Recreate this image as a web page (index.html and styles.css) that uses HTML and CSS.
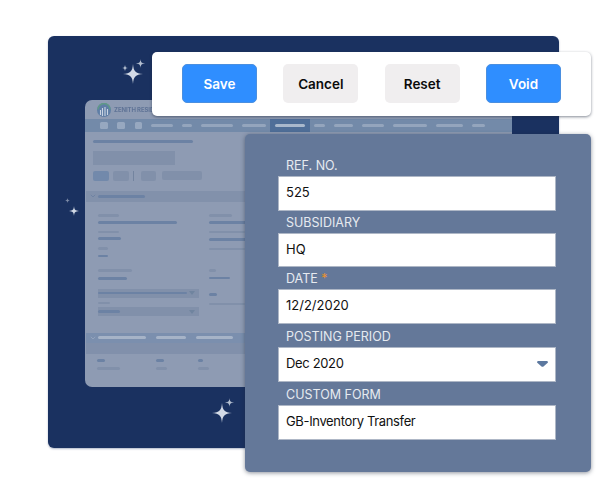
FILE: index.html
```html
<!DOCTYPE html>
<html lang="en">
<head>
<meta charset="utf-8">
<title>Inventory Transfer</title>
<link rel="stylesheet" href="styles.css">
</head>
<body>
<div class="stage">
  <div class="card">
    <div class="app">
      <div class="app-head">
        <svg class="logo" viewBox="0 0 14 14" width="14" height="14" aria-hidden="true">
          <circle cx="7" cy="7" r="7" fill="#5f7ea6"/>
          <path d="M1 6.500A6 6 0 0 1 13 6.500" fill="none" stroke="#5f9a86" stroke-width="1.4"/>
          <path d="M3.500 12V7M5.500 13V5M8 13V4M10.500 12V6" stroke="#c9d3e2" stroke-width="1.1"/>
        </svg>
        <span class="app-name">ZENITH RESIDENCES</span>
      </div>
      <div class="nav">
        <i class="sq"></i><i class="sq wide"></i><i class="sq"></i>
        <i class="nb w22"></i><i class="nb w10"></i><i class="nb w32"></i><i class="nb w24"></i>
        <span class="nav-active"><i class="nb w30 on"></i></span>
        <i class="nb w11"></i><i class="nb w19"></i><i class="nb w22"></i><i class="nb w34"></i><i class="nb w27"></i><i class="nb w13"></i>
      </div>
      <div class="main">
        <div class="title-bar"></div>
        <div class="title-box"></div>
        <div class="actions">
          <i class="act primary"></i><i class="act"></i><i class="sep"></i><i class="act last"></i><i class="act long"></i>
        </div>
        <div class="section">
          <svg class="chev" viewBox="0 0 6 4" width="6" height="4" aria-hidden="true"><path d="M.8.8 3 3 5.200.8" fill="none" stroke="#6f83a3" stroke-width="1"/></svg>
          <i class="bar dark w47"></i>
        </div>
        <div class="form">
          <div class="col">
            <i class="bar faint w21"></i><i class="bar dark w79 m4"></i>
            <i class="bar thin faint w21 m7"></i><i class="bar dark w23 m4"></i>
            <i class="bar thin faint w10 m7"></i><i class="bar thin dark w10 m5"></i>
            <i class="bar thin faint w34 m12"></i><i class="bar dark w29 m5"></i>
            <div class="sel s1"><i class="bar thin dark w89"></i><i class="caret"></i></div>
            <i class="bar thin faint w12 m4"></i>
            <div class="sel s2"><i class="bar thin dark w22"></i><i class="caret"></i></div>
          </div>
          <div class="col">
            <i class="bar faint w23"></i><i class="bar dark w79 m4"></i>
            <i class="bar thin faint w36 m7"></i><i class="bar thin dark w79 m5"></i>
            <i class="bar thin faint w36 m7"></i>
            <i class="bar thin faint w7 m19"></i><i class="bar thin dark w21 m5"></i>
            <i class="bar thin dark w8 m14"></i>
            <i class="bar thin faint w36 m7"></i>
          </div>
        </div>
        <div class="section second">
          <svg class="chev" viewBox="0 0 6 4" width="6" height="4" aria-hidden="true"><path d="M.8.8 3 3 5.200.8" fill="none" stroke="#93a3bc" stroke-width="1"/></svg>
          <i class="bar light w48"></i><i class="bar light w30"></i><i class="bar light w37"></i>
        </div>
        <div class="strip"></div>
        <div class="foot">
          <div class="foot-col c1"><i class="bar dark w8"></i><i class="bar thin faint w23 m5"></i></div>
          <div class="foot-col c2"><i class="bar dark w8"></i><i class="bar thin faint w11 m5"></i></div>
          <div class="foot-col c3"><i class="bar dark w5"></i><i class="bar thin faint w11 m5"></i></div>
        </div>
      </div>
    </div>
  </div>

  <svg class="star s-a" viewBox="-10 -10 20 20" aria-hidden="true"><path d="M0-10C.6-2.500 2.500-.6 10 0 2.500.6.6 2.500 0 10-.6 2.500-2.500.6-10 0-2.500-.6-.6-2.500 0-10Z"/></svg>
  <svg class="star s-b dim" viewBox="-10 -10 20 20" aria-hidden="true"><path d="M0-10C.6-2.500 2.500-.6 10 0 2.500.6.6 2.500 0 10-.6 2.500-2.500.6-10 0-2.500-.6-.6-2.500 0-10Z"/></svg>
  <svg class="star s-c dim" viewBox="-10 -10 20 20" aria-hidden="true"><path d="M0-10C1.500-2.500 2.500-1.500 10 0 2.500 1.500 1.500 2.500 0 10-1.500 2.500-2.500 1.500-10 0-2.500-1.500-1.500-2.500 0-10Z"/></svg>
  <svg class="star s-d" viewBox="-10 -10 20 20" aria-hidden="true"><path d="M0-10C.6-2.500 2.500-.6 10 0 2.500.6.6 2.500 0 10-.6 2.500-2.500.6-10 0-2.500-.6-.6-2.500 0-10Z"/></svg>
  <svg class="star s-e faintstar" viewBox="-10 -10 20 20" aria-hidden="true"><path d="M0-10C1.500-2.500 2.500-1.500 10 0 2.500 1.500 1.500 2.500 0 10-1.500 2.500-2.500 1.500-10 0-2.500-1.500-1.500-2.500 0-10Z"/></svg>
  <svg class="star s-f" viewBox="-10 -10 20 20" aria-hidden="true"><path d="M0-10C.6-2.500 2.500-.6 10 0 2.500.6.6 2.500 0 10-.6 2.500-2.500.6-10 0-2.500-.6-.6-2.500 0-10Z"/></svg>
  <svg class="star s-g dim" viewBox="-10 -10 20 20" aria-hidden="true"><path d="M0-10C.6-2.500 2.500-.6 10 0 2.500.6.6 2.500 0 10-.6 2.500-2.500.6-10 0-2.500-.6-.6-2.500 0-10Z"/></svg>

  <div class="toolbar">
    <button class="btn blue">Save</button>
    <button class="btn grey">Cancel</button>
    <button class="btn grey">Reset</button>
    <button class="btn blue">Void</button>
  </div>

  <div class="panel">
    <div class="field upper">
      <div class="label">REF. NO.</div>
      <div class="input">525</div>
    </div>
    <div class="field upper">
      <div class="label">SUBSIDIARY</div>
      <div class="input">HQ</div>
    </div>
    <div class="field">
      <div class="label">DATE <span class="req">*</span></div>
      <div class="input">12/2/2020</div>
    </div>
    <div class="field">
      <div class="label">POSTING PERIOD</div>
      <div class="input select"><span class="tight">Dec 2020</span>
        <svg class="arrow" viewBox="0 0 11 6" width="11" height="6" aria-hidden="true"><path d="M.6 0H10.400L11 1.500 6.500 5.500Q5.500 6.200 4.500 5.500L0 1.500Z"/></svg>
      </div>
    </div>
    <div class="field">
      <div class="label">CUSTOM FORM</div>
      <div class="input"><span class="tight">GB-Inventory Transfer</span></div>
    </div>
  </div>
</div>
</body>
</html>
```
FILE: styles.css
```css
* { box-sizing: border-box; }
html, body { margin: 0; background: #fff; }
body { font-family: Inter, "Open Sans", "Liberation Sans", sans-serif; }
i { display: block; }

.stage { position: relative; width: 606px; height: 483px; padding: 36px 47px 0 48px; overflow: hidden; }

/* navy backdrop */
.card { height: 412px; padding: 64px 47px 0 37px; background: #1a3160; border-radius: 6px; box-shadow: 0 1px 2px rgba(26,49,96,.35); }

/* faded application window */
.app { height: 287px; background: #8e9bb3; border-radius: 7px; overflow: hidden; filter: blur(.35px); }
.app-head { height: 19px; padding-left: 12px; display: flex; align-items: center; gap: 3px; }
.app-name { font-size: 6px; font-weight: 700; color: #5f7396; white-space: nowrap; letter-spacing: -.1px; }

.nav { height: 13px; padding-left: 15px; display: flex; align-items: center; gap: 9px; background: #738aa9; }
.sq { width: 7.500px; height: 7.500px; border-radius: 1.500px; background: #97a8c0; }
.sq.wide { width: 8px; margin-right: 1px; }
.nb { height: 2.500px; border-radius: 2px; background: #94a5bd; }
.nb.on { background: #a9b8cc; }
.nav-active { height: 13px; margin: 0 -5px; padding: 0 5px; display: flex; align-items: center; background: #4f6e98; }
.w5 { width: 5px; } .w7 { width: 7px; } .w8 { width: 8px; } .w10 { width: 10px; } .w11 { width: 11px; } .w12 { width: 12px; } .w13 { width: 13px; }
.w19 { width: 19px; } .w21 { width: 21px; } .w22 { width: 22px; } .w23 { width: 23px; } .w24 { width: 24px; } .w27 { width: 27px; }
.w29 { width: 29px; } .w30 { width: 30px; } .w32 { width: 32px; } .w34 { width: 34px; } .w36 { width: 36px; } .w37 { width: 37px; }
.w47 { width: 47px; } .w48 { width: 48px; } .w79 { width: 79px; } .w89 { width: 89px; }

.main { padding: 8px 0 0 8px; }
.title-bar { width: 100px; height: 3px; border-radius: 2px; background: #6c82a4; }
.title-box { width: 82px; height: 14px; margin-top: 8px; background: #8190aa; }
.actions { margin-top: 6px; display: flex; align-items: flex-start; gap: 4px; }
.act { width: 16px; height: 10px; border-radius: 2px; background: #8190aa; }
.act.primary { background: #7289ab; }
.sep { width: 1px; height: 10px; background: #73849f; }
.act.last { width: 15px; margin-left: 3px; margin-right: 2px; }
.act.long { width: 40px; height: 9px; }

.section { height: 10.500px; margin: 10px 0 0 -7px; padding-left: 4px; display: flex; align-items: center; background: #8291ab; }
.chev { margin-right: 2px; }
.section .bar { margin-right: 10px; }
.section.second { margin-top: 19px; background: #7b8fae; }
.strip { height: 11px; margin-left: -7px; background: #8190ab; }

.bar { height: 3px; border-radius: 2px; }
.bar.thin { height: 2.500px; }
.dark { background: #6c82a4; }
.faint { background: #8190aa; }
.light { background: #a6b3c7; }
.m4 { margin-top: 4px; } .m5 { margin-top: 5px; } .m7 { margin-top: 7px; } .m12 { margin-top: 12px; } .m14 { margin-top: 14px; } .m19 { margin-top: 19px; }

.form { height: 112px; padding: 12px 0 0 5px; display: grid; grid-template-columns: 111px 111px; }
.sel { width: 101px; height: 9px; display: flex; align-items: center; justify-content: space-between; padding-right: 4px; background: #8190aa; }
.sel.s1 { margin-top: 9px; }
.sel.s2 { margin-top: 3px; }
.caret { width: 0; height: 0; border: 3px solid transparent; border-top: 4px solid #70849f; border-bottom: 0; }

.foot { margin-top: 5px; display: flex; padding-left: 4px; }
.foot-col.c1 { width: 59px; }
.foot-col.c2 { width: 42px; }

/* sparkles */
.star { position: absolute; display: block; fill: #d3dae6; filter: blur(.25px); }
.star.dim { fill: #b4bfd0; }
.star.faintstar { fill: #7f8da8; }
.s-a { left: 123px; top: 64px; width: 20px; height: 20px; }
.s-b { left: 135.500px; top: 58.500px; width: 9px; height: 9px; }
.s-c { left: 122px; top: 65px; width: 6px; height: 6px; }
.s-d { left: 69px; top: 206px; width: 10px; height: 10px; }
.s-e { left: 64.500px; top: 197.500px; width: 5px; height: 5px; }
.s-f { left: 212px; top: 403px; width: 20px; height: 20px; }
.s-g { left: 224.500px; top: 397.500px; width: 9px; height: 9px; }

/* floating toolbar */
.toolbar { position: absolute; left: 152px; top: 52px; width: 439px; height: 64px; padding: 12px 30px 0; display: flex; justify-content: space-between; align-items: flex-start; background: #fff; border-radius: 5px; box-shadow: 0 1px 3px rgba(30,40,60,.55); }
.btn { width: 75px; height: 39px; padding: 0; border-radius: 5px; border: 1px solid transparent; font: 600 13.500px Inter, sans-serif; }
.btn.blue { background: #2f8eff; border-color: #4a8fe0; color: #fff; }
.btn.grey { background: #f0eeef; color: #0b0b0b; }

/* form panel */
.panel { position: absolute; left: 245px; top: 134px; width: 346px; height: 338px; padding: 20px 35px 0 33px; background: #647899; border-radius: 5px; box-shadow: 0 1px 4px rgba(30,40,60,.5); }
.field { height: 58px; }
.field.upper { height: 56.500px; }
.label { height: 22px; padding-left: 8px; font-size: 12.500px; line-height: 24px; color: #e6eaf0; white-space: nowrap; }
.req { color: #e8912d; }
.input { height: 34.500px; padding: 0 7px 2px; display: flex; align-items: center; background: #fff; border: 1px solid #aeb7c6; font-size: 13px; color: #111; }
.tight { letter-spacing: -.35px; }
.select { justify-content: space-between; }
.arrow { fill: #5c789f; margin: 2px 0 0; }
```
